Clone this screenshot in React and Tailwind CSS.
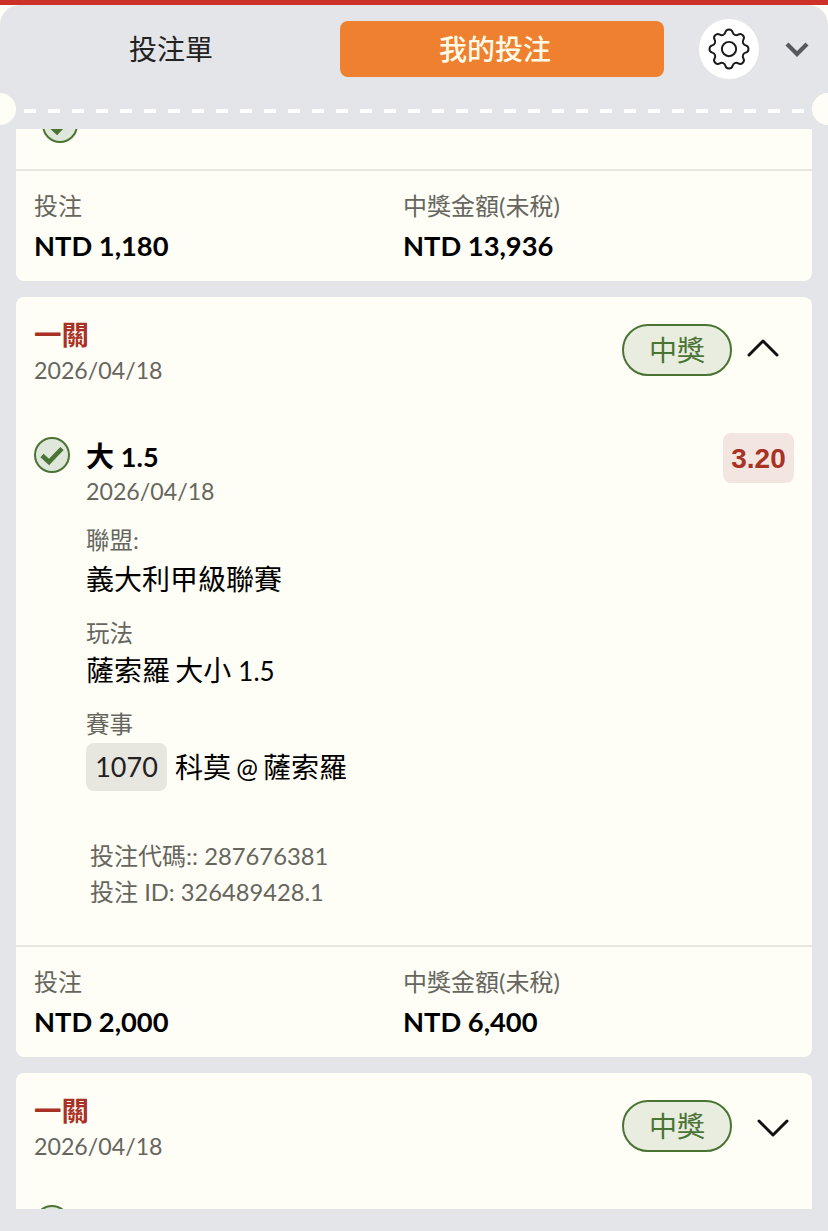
import React from "react";

const CheckIcon = () => (
  <svg width="36" height="36" viewBox="0 0 36 36" className="shrink-0">
    <circle cx="18" cy="18" r="17" fill="#dfe6da" stroke="#4a7434" strokeWidth="2" />
    <path d="M8 18.5 L15 25 L28 11.5" fill="none" stroke="#4a7434" strokeWidth="4.6" />
  </svg>
);

const Chevron = ({ up, className }) => (
  <svg width="34" height="22" viewBox="0 0 34 22" className={className}>
    <path
      d={up ? "M3 19 L17 5 L31 19" : "M3 4 L17 18 L31 4"}
      fill="none"
      stroke="#111"
      strokeWidth="3"
      strokeLinecap="round"
      strokeLinejoin="round"
    />
  </svg>
);

const Gear = () => (
  <svg width="52" height="52" viewBox="0 0 24 24" fill="none" stroke="#1a1a1a" strokeWidth="0.9" strokeLinecap="round" strokeLinejoin="round">
    <path d="M10.325 4.317c.426-1.756 2.924-1.756 3.35 0a1.724 1.724 0 0 0 2.573 1.066c1.543-.94 3.31.826 2.37 2.37a1.724 1.724 0 0 0 1.065 2.572c1.756.426 1.756 2.924 0 3.35a1.724 1.724 0 0 0-1.066 2.573c.94 1.543-.826 3.31-2.37 2.37a1.724 1.724 0 0 0-2.572 1.065c-.426 1.756-2.924 1.756-3.35 0a1.724 1.724 0 0 0-2.573-1.066c-1.543.94-3.31-.826-2.37-2.37a1.724 1.724 0 0 0-1.065-2.572c-1.756-.426-1.756-2.924 0-3.35a1.724 1.724 0 0 0 1.066-2.573c-.94-1.543.826-3.31 2.37-2.37.996.608 2.296.07 2.572-1.065z" />
    <circle cx="12" cy="12" r="3.3" />
  </svg>
);

const Totals = ({ stake, payout }) => (
  <div className="flex h-[112px] border-t-2 border-[#e8e7df] pl-[18px] pt-[19px]">
    <div className="w-[369px]">
      <div className="text-[24px] leading-[32px] text-[#66665f]">投注</div>
      <div className="mt-[7px] text-[27.3px] leading-[34px] font-bold text-black">{stake}</div>
    </div>
    <div>
      <div className="text-[24px] leading-[32px] text-[#66665f]">中獎金額(未稅)</div>
      <div className="mt-[7px] text-[27.3px] leading-[34px] font-bold text-black">{payout}</div>
    </div>
  </div>
);

const CardHead = ({ up }) => (
  <div className="flex items-start justify-between pl-[18px] pt-[21px]">
    <div>
      <div className="text-[27.5px] leading-[34px] font-bold text-[#a93226]">一關</div>
      <div className="mt-[2px] text-[23.2px] leading-[32px] text-[#66665f]">2026/04/18</div>
    </div>
    <div className="mt-[6px] flex items-center">
      <div className="flex h-[52px] w-[110px] items-center justify-center rounded-full border-2 border-[#4a7434] bg-[#e8eddf] text-[28px] text-[#4a7434]">
        中獎
      </div>
      <Chevron up={up} className={up ? "ml-[14px] mr-[32px] -mt-[6px]" : "ml-[24px] mr-[22px] mt-[3px]"} />
    </div>
  </div>
);

const Field = ({ label, children, className }) => (
  <div className={className}>
    <div className="text-[23.5px] leading-[30px] text-[#66665f]">{label}</div>
    {children}
  </div>
);

export default function App() {
  return (
    <div
      className="relative h-[1231px] w-[828px] overflow-hidden bg-[#fefef6]"
      style={{ fontFamily: 'Lato, "Noto Sans CJK TC", sans-serif' }}
    >
      <div className="h-[5px] bg-[#cd3228]" />
      <div className="flex h-[1226px] flex-col overflow-hidden rounded-t-[20px] bg-[#e3e5e8]">
        {/* header */}
        <div className="relative h-[124px] shrink-0">
          <div className="flex items-center pt-[14px]">
            <button className="h-[56px] w-[340px] pl-[2px] text-[28px] text-[#222]">投注單</button>
            <button className="h-[56px] w-[324px] rounded-[8px] bg-[#ef8030] pr-[14px] text-[28px] font-medium text-[#fffbe9]">我的投注</button>
            <div className="ml-[35px] flex h-[60px] w-[60px] items-center justify-center rounded-full bg-white">
              <Gear />
            </div>
            <svg width="26" height="16" viewBox="0 0 26 16" className="ml-[25px]">
              <path d="M3 3 L13 13 L23 3" fill="none" stroke="#55585c" strokeWidth="4.2" />
            </svg>
          </div>
          <div className="absolute left-[24px] right-[24px] top-[104px] h-[4px] bg-[repeating-linear-gradient(90deg,#fff_0_12px,transparent_12px_24px)]" />
          <div className="absolute -left-[16px] top-[88px] h-[32px] w-[32px] rounded-full bg-[#fefef6]" />
          <div className="absolute -right-[16px] top-[88px] h-[32px] w-[32px] rounded-full bg-[#fefef6]" />
        </div>

        {/* scrolling list */}
        <div className="mx-[16px] h-[1080px] shrink-0 overflow-hidden">
          <div className="-mt-[25px]">
            <div className="rounded-b-[8px] bg-[#fefef6]">
              <div className="h-[65px] pl-[26px] pt-[3px]">
                <CheckIcon />
              </div>
              <Totals stake="NTD 1,180" payout="NTD 13,936" />
            </div>

            <div className="mt-[16px] rounded-[8px] bg-[#fefef6]">
              <CardHead up />
              <div className="mt-[51px] h-[508px] pl-[18px]">
                <div className="flex items-start">
                  <CheckIcon />
                  <div className="ml-[16px]">
                    <div className="mt-[2px] text-[28px] leading-[34px] font-bold text-black">
                      大 <span className="text-[27px]">1.5</span>
                    </div>
                    <div className="mt-[1px] text-[23.2px] leading-[32px] text-[#66665f]">2026/04/18</div>
                  </div>
                  <div className="ml-auto mr-[18px] -mt-[4px] flex h-[50px] w-[71px] items-center justify-center rounded-[8px] bg-[#f3e6e1] pt-[2px] font-['Liberation_Sans'] text-[28px] font-bold text-[#a93226]">
                    3.20
                  </div>
                </div>
                <div className="ml-[52px]">
                  <Field label="聯盟:" className="mt-[18px]">
                    <div className="text-[28px] leading-[48px] text-black">義大利甲級聯賽</div>
                  </Field>
                  <Field label="玩法" className="mt-[15px]">
                    <div className="text-[28px] leading-[44px] text-black">
                      薩索羅<span className="text-[20px]"> </span>大小 <span className="text-[26px]">1.5</span>
                    </div>
                  </Field>
                  <Field label="賽事" className="mt-[14px]">
                    <div className="mt-[4px] flex items-center text-[28px] text-black">
                      <span className="flex h-[48px] w-[81px] items-center justify-center rounded-[8px] bg-[#e7e6df] text-[27px] text-[#222]">1070</span>
                      <span className="ml-[8px]">
                        科莫<span className="text-[20px]"> </span><span className="text-[26px]">@</span><span className="text-[20px]"> </span>薩索羅
                      </span>
                    </div>
                  </Field>
                  <div className="ml-[4px] mt-[47px] text-[24px] leading-[36px] text-[#66665f]">
                    <div>投注代碼:: <span className="text-[23.8px]">287676381</span></div>
                    <div>投注 <span className="text-[23.7px]">ID: 326489428.1</span></div>
                  </div>
                </div>
              </div>
              <Totals stake="NTD 2,000" payout="NTD 6,400" />
            </div>

            <div className="mt-[16px] rounded-[8px] bg-[#fefef6]">
              <CardHead />
              <div className="mt-[43px] pl-[18px]">
                <CheckIcon />
              </div>
            </div>
          </div>
        </div>
      </div>
    </div>
  );
}
